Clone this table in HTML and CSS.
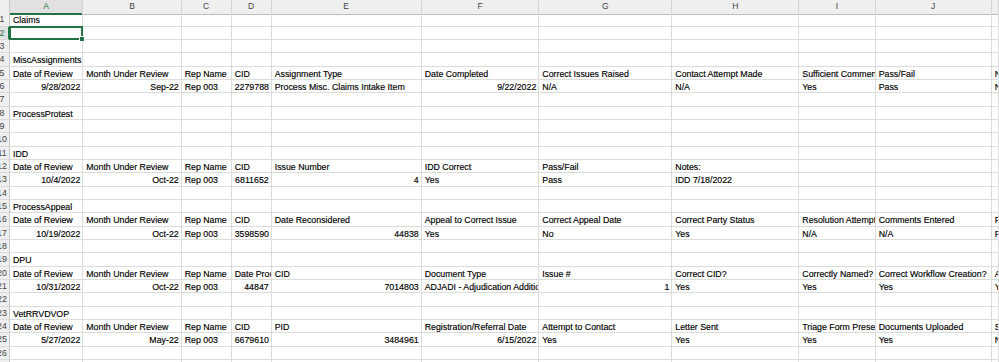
FILE: index.html
```html
<!DOCTYPE html>
<html>
<head>
<meta charset="utf-8">
<link rel="stylesheet" href="styles.css">
</head>
<body>
<div class="sheet">
  <div class="row head"><div class="rh corner"></div><div class="ch sel">A</div><div class="ch">B</div><div class="ch">C</div><div class="ch">D</div><div class="ch">E</div><div class="ch">F</div><div class="ch">G</div><div class="ch">H</div><div class="ch">I</div><div class="ch">J</div><div class="ch"></div></div>

  <div class="row"><div class="rh"><span>1</span></div><div class="c">Claims</div><div class="c"></div><div class="c"></div><div class="c"></div><div class="c"></div><div class="c"></div><div class="c"></div><div class="c"></div><div class="c"></div><div class="c"></div><div class="c"></div></div>
  <div class="row"><div class="rh selr"><span>2</span></div><div class="c active"><i class="handle"></i></div><div class="c"></div><div class="c"></div><div class="c"></div><div class="c"></div><div class="c"></div><div class="c"></div><div class="c"></div><div class="c"></div><div class="c"></div><div class="c"></div></div>
  <div class="row"><div class="rh"><span>3</span></div><div class="c"></div><div class="c"></div><div class="c"></div><div class="c"></div><div class="c"></div><div class="c"></div><div class="c"></div><div class="c"></div><div class="c"></div><div class="c"></div><div class="c"></div></div>
  <div class="row"><div class="rh"><span>4</span></div><div class="c">MiscAssignments</div><div class="c"></div><div class="c"></div><div class="c"></div><div class="c"></div><div class="c"></div><div class="c"></div><div class="c"></div><div class="c"></div><div class="c"></div><div class="c"></div></div>
  <div class="row"><div class="rh"><span>5</span></div><div class="c">Date of Review</div><div class="c">Month Under Review</div><div class="c">Rep Name</div><div class="c">CID</div><div class="c">Assignment Type</div><div class="c">Date Completed</div><div class="c">Correct Issues Raised</div><div class="c">Contact Attempt Made</div><div class="c">Sufficient Comments</div><div class="c">Pass/Fail</div><div class="c">Notes:</div></div>
  <div class="row"><div class="rh"><span>6</span></div><div class="c r">9/28/2022</div><div class="c r">Sep-22</div><div class="c">Rep 003</div><div class="c r">2279788</div><div class="c">Process Misc. Claims Intake Item</div><div class="c r">9/22/2022</div><div class="c">N/A</div><div class="c">N/A</div><div class="c">Yes</div><div class="c">Pass</div><div class="c">N/A</div></div>
  <div class="row"><div class="rh"><span>7</span></div><div class="c"></div><div class="c"></div><div class="c"></div><div class="c"></div><div class="c"></div><div class="c"></div><div class="c"></div><div class="c"></div><div class="c"></div><div class="c"></div><div class="c"></div></div>
  <div class="row"><div class="rh"><span>8</span></div><div class="c">ProcessProtest</div><div class="c"></div><div class="c"></div><div class="c"></div><div class="c"></div><div class="c"></div><div class="c"></div><div class="c"></div><div class="c"></div><div class="c"></div><div class="c"></div></div>
  <div class="row"><div class="rh"><span>9</span></div><div class="c"></div><div class="c"></div><div class="c"></div><div class="c"></div><div class="c"></div><div class="c"></div><div class="c"></div><div class="c"></div><div class="c"></div><div class="c"></div><div class="c"></div></div>
  <div class="row"><div class="rh"><span>10</span></div><div class="c"></div><div class="c"></div><div class="c"></div><div class="c"></div><div class="c"></div><div class="c"></div><div class="c"></div><div class="c"></div><div class="c"></div><div class="c"></div><div class="c"></div></div>
  <div class="row"><div class="rh"><span>11</span></div><div class="c">IDD</div><div class="c"></div><div class="c"></div><div class="c"></div><div class="c"></div><div class="c"></div><div class="c"></div><div class="c"></div><div class="c"></div><div class="c"></div><div class="c"></div></div>
  <div class="row"><div class="rh"><span>12</span></div><div class="c">Date of Review</div><div class="c">Month Under Review</div><div class="c">Rep Name</div><div class="c">CID</div><div class="c">Issue Number</div><div class="c">IDD Correct</div><div class="c">Pass/Fail</div><div class="c">Notes:</div><div class="c"></div><div class="c"></div><div class="c"></div></div>
  <div class="row"><div class="rh"><span>13</span></div><div class="c r">10/4/2022</div><div class="c r">Oct-22</div><div class="c">Rep 003</div><div class="c r">6811652</div><div class="c r">4</div><div class="c">Yes</div><div class="c">Pass</div><div class="c">IDD 7/18/2022</div><div class="c"></div><div class="c"></div><div class="c"></div></div>
  <div class="row"><div class="rh"><span>14</span></div><div class="c"></div><div class="c"></div><div class="c"></div><div class="c"></div><div class="c"></div><div class="c"></div><div class="c"></div><div class="c"></div><div class="c"></div><div class="c"></div><div class="c"></div></div>
  <div class="row"><div class="rh"><span>15</span></div><div class="c">ProcessAppeal</div><div class="c"></div><div class="c"></div><div class="c"></div><div class="c"></div><div class="c"></div><div class="c"></div><div class="c"></div><div class="c"></div><div class="c"></div><div class="c"></div></div>
  <div class="row"><div class="rh"><span>16</span></div><div class="c">Date of Review</div><div class="c">Month Under Review</div><div class="c">Rep Name</div><div class="c">CID</div><div class="c">Date Reconsidered</div><div class="c">Appeal to Correct Issue</div><div class="c">Correct Appeal Date</div><div class="c">Correct Party Status</div><div class="c">Resolution Attempted</div><div class="c">Comments Entered</div><div class="c">Pass/Fail</div></div>
  <div class="row"><div class="rh"><span>17</span></div><div class="c r">10/19/2022</div><div class="c r">Oct-22</div><div class="c">Rep 003</div><div class="c r">3598590</div><div class="c r">44838</div><div class="c">Yes</div><div class="c">No</div><div class="c">Yes</div><div class="c">N/A</div><div class="c">N/A</div><div class="c">Fail</div></div>
  <div class="row"><div class="rh"><span>18</span></div><div class="c"></div><div class="c"></div><div class="c"></div><div class="c"></div><div class="c"></div><div class="c"></div><div class="c"></div><div class="c"></div><div class="c"></div><div class="c"></div><div class="c"></div></div>
  <div class="row"><div class="rh"><span>19</span></div><div class="c">DPU</div><div class="c"></div><div class="c"></div><div class="c"></div><div class="c"></div><div class="c"></div><div class="c"></div><div class="c"></div><div class="c"></div><div class="c"></div><div class="c"></div></div>
  <div class="row"><div class="rh"><span>20</span></div><div class="c">Date of Review</div><div class="c">Month Under Review</div><div class="c">Rep Name</div><div class="c">Date Processed</div><div class="c">CID</div><div class="c">Document Type</div><div class="c">Issue #</div><div class="c">Correct CID?</div><div class="c">Correctly Named?</div><div class="c">Correct Workflow Creation?</div><div class="c">Attached</div></div>
  <div class="row"><div class="rh"><span>21</span></div><div class="c r">10/31/2022</div><div class="c r">Oct-22</div><div class="c">Rep 003</div><div class="c r">44847</div><div class="c r">7014803</div><div class="c">ADJADI - Adjudication Additional</div><div class="c r">1</div><div class="c">Yes</div><div class="c">Yes</div><div class="c">Yes</div><div class="c">Yes</div></div>
  <div class="row"><div class="rh"><span>22</span></div><div class="c"></div><div class="c"></div><div class="c"></div><div class="c"></div><div class="c"></div><div class="c"></div><div class="c"></div><div class="c"></div><div class="c"></div><div class="c"></div><div class="c"></div></div>
  <div class="row"><div class="rh"><span>23</span></div><div class="c">VetRRVDVOP</div><div class="c"></div><div class="c"></div><div class="c"></div><div class="c"></div><div class="c"></div><div class="c"></div><div class="c"></div><div class="c"></div><div class="c"></div><div class="c"></div></div>
  <div class="row"><div class="rh"><span>24</span></div><div class="c">Date of Review</div><div class="c">Month Under Review</div><div class="c">Rep Name</div><div class="c">CID</div><div class="c">PID</div><div class="c">Registration/Referral Date</div><div class="c">Attempt to Contact</div><div class="c">Letter Sent</div><div class="c">Triage Form Present</div><div class="c">Documents Uploaded</div><div class="c">Status</div></div>
  <div class="row"><div class="rh"><span>25</span></div><div class="c r">5/27/2022</div><div class="c r">May-22</div><div class="c">Rep 003</div><div class="c r">6679610</div><div class="c r">3484961</div><div class="c r">6/15/2022</div><div class="c">Yes</div><div class="c">Yes</div><div class="c">Yes</div><div class="c">Yes</div><div class="c">No</div></div>
  <div class="row"><div class="rh"><span>26</span></div><div class="c"></div><div class="c"></div><div class="c"></div><div class="c"></div><div class="c"></div><div class="c"></div><div class="c"></div><div class="c"></div><div class="c"></div><div class="c"></div><div class="c"></div></div>
  <div class="row"><div class="rh"><span>27</span></div><div class="c">DFCDL</div><div class="c"></div><div class="c"></div><div class="c"></div><div class="c"></div><div class="c"></div><div class="c"></div><div class="c"></div><div class="c"></div><div class="c"></div><div class="c"></div></div>
</div>
</body>
</html>
```

FILE: styles.css
```css
html, body {
  margin: 0;
  padding: 0;
  background: #ffffff;
  overflow: hidden;
}

.sheet {
  width: 999px;
  height: 362px;
  overflow: hidden;
  font-family: "Liberation Sans", Arial, sans-serif;
  font-size: 8.8px;
  color: #000;
  -webkit-text-stroke: 0.15px #000;
}

.row {
  display: grid;
  grid-template-columns: 10px 73.3px 98.4px 50px 40px 150px 117.6px 133px 127px 76.4px 116px 1fr;
  height: 13.333px;
}

.c {
  box-sizing: border-box;
  border-right: 1px solid #dcdcdc;
  border-bottom: 1px solid #dcdcdc;
  padding: 1px 2px 0 3px;
  line-height: 12px;
  white-space: nowrap;
  overflow: hidden;
  position: relative;
}

.c.r {
  text-align: right;
}

.c.active {
  overflow: visible;
  border: 2px solid #217346;
  margin: -1px 0 0 -1px;
  height: calc(100% + 1px);
  width: calc(100% + 1px);
  box-sizing: border-box;
  z-index: 2;
}

.handle {
  position: absolute;
  right: -4px;
  bottom: -4px;
  width: 4px;
  height: 4px;
  background: #217346;
  border: 1px solid #ffffff;
}

.rh {
  box-sizing: border-box;
  background: #efefef;
  border-right: 1px solid #c8c8c8;
  border-bottom: 1px solid #dadada;
  overflow: hidden;
  color: #444;
  -webkit-text-stroke: 0;
  line-height: 13px;
}

.rh span {
  display: block;
  width: 18px;
  margin-left: -7px;
  text-align: center;
}

.rh.selr {
  background: #e1e1e1;
  color: #217346;
  border-right: 2px solid #217346;
}

.head {
  height: 13.333px;
}

.ch {
  box-sizing: border-box;
  background: #efefef;
  border-right: 1px solid #d4d4d4;
  border-bottom: 1px solid #bdbdbd;
  color: #444;
  -webkit-text-stroke: 0;
  text-align: center;
  line-height: 13px;
  font-size: 8.5px;
}

.ch.sel {
  background: #e1e1e1;
  color: #217346;
  border-bottom: 2px solid #217346;
}

.rh.corner {
  border-bottom: 1px solid #bdbdbd;
}
```
